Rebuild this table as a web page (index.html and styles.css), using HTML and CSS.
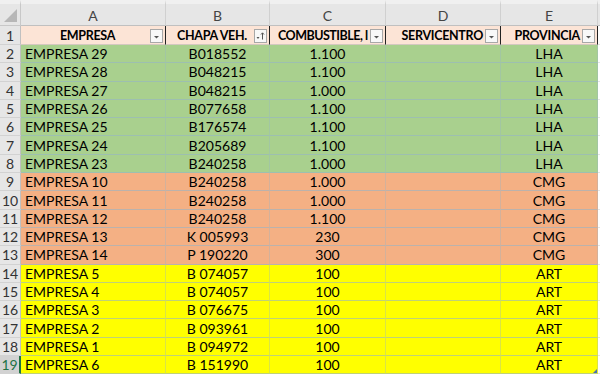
FILE: index.html
```html
<!DOCTYPE html>
<html>
<head>
<meta charset="utf-8">
<link rel="stylesheet" href="styles.css">
</head>
<body>
<div class="sheet">
  <div class="corner"><svg width="21" height="25" viewBox="0 0 21 25"><polygon points="17,9 17,22 4,22" fill="#b7b7b7"/></svg></div>
  <div class="colh">A</div><div class="colh">B</div><div class="colh">C</div><div class="colh">D</div><div class="colh">E</div><div class="colh end"></div>

  <div class="rowh hr">1</div>
  <div class="th"><span class="lbl">EMPRESA</span><span class="dd"><svg width="11" height="12" viewBox="0 0 11 12"><polygon points="3,6 8,6 5.5,8.5" fill="#555"/></svg></span></div>
  <div class="th"><span class="lbl">CHAPA VEH.</span><span class="dd"><svg width="11" height="12" viewBox="0 0 11 12"><polygon points="1.5,7 4.5,7 3,9" fill="#555"/><path d="M7.5 3V9.5M6 4.5L7.5 2.8L9 4.5" stroke="#555" stroke-width="1" fill="none"/></svg></span></div>
  <div class="th"><span class="lbl left">COMBUSTIBLE, l</span><span class="dd"><svg width="11" height="12" viewBox="0 0 11 12"><polygon points="3,6 8,6 5.5,8.5" fill="#555"/></svg></span></div>
  <div class="th right"><span class="lbl">SERVICENTRO</span><span class="dd"><svg width="11" height="12" viewBox="0 0 11 12"><polygon points="3,6 8,6 5.5,8.5" fill="#555"/></svg></span></div>
  <div class="th right"><span class="lbl">PROVINCIA</span><span class="dd"><svg width="11" height="12" viewBox="0 0 11 12"><polygon points="3,6 8,6 5.5,8.5" fill="#555"/></svg></span></div>
  <div class="tail hr"></div>

  <div class="rowh">2</div><div class="c g l">EMPRESA 29</div><div class="c g">B018552</div><div class="c g">1.100</div><div class="c g"></div><div class="c g">LHA</div><div class="tail"></div>
  <div class="rowh">3</div><div class="c g l">EMPRESA 28</div><div class="c g">B048215</div><div class="c g">1.100</div><div class="c g"></div><div class="c g">LHA</div><div class="tail"></div>
  <div class="rowh">4</div><div class="c g l">EMPRESA 27</div><div class="c g">B048215</div><div class="c g">1.000</div><div class="c g"></div><div class="c g">LHA</div><div class="tail"></div>
  <div class="rowh">5</div><div class="c g l">EMPRESA 26</div><div class="c g">B077658</div><div class="c g">1.100</div><div class="c g"></div><div class="c g">LHA</div><div class="tail"></div>
  <div class="rowh">6</div><div class="c g l">EMPRESA 25</div><div class="c g">B176574</div><div class="c g">1.100</div><div class="c g"></div><div class="c g">LHA</div><div class="tail"></div>
  <div class="rowh">7</div><div class="c g l">EMPRESA 24</div><div class="c g">B205689</div><div class="c g">1.100</div><div class="c g"></div><div class="c g">LHA</div><div class="tail"></div>
  <div class="rowh">8</div><div class="c g l">EMPRESA 23</div><div class="c g">B240258</div><div class="c g">1.000</div><div class="c g"></div><div class="c g">LHA</div><div class="tail"></div>

  <div class="rowh">9</div><div class="c o l">EMPRESA 10</div><div class="c o">B240258</div><div class="c o">1.000</div><div class="c o"></div><div class="c o">CMG</div><div class="tail"></div>
  <div class="rowh">10</div><div class="c o l">EMPRESA 11</div><div class="c o">B240258</div><div class="c o">1.000</div><div class="c o"></div><div class="c o">CMG</div><div class="tail"></div>
  <div class="rowh">11</div><div class="c o l">EMPRESA 12</div><div class="c o">B240258</div><div class="c o">1.100</div><div class="c o"></div><div class="c o">CMG</div><div class="tail"></div>
  <div class="rowh">12</div><div class="c o l">EMPRESA 13</div><div class="c o">K 005993</div><div class="c o">230</div><div class="c o"></div><div class="c o">CMG</div><div class="tail"></div>
  <div class="rowh">13</div><div class="c o l">EMPRESA 14</div><div class="c o">P 190220</div><div class="c o">300</div><div class="c o"></div><div class="c o">CMG</div><div class="tail"></div>

  <div class="rowh">14</div><div class="c y l">EMPRESA 5</div><div class="c y">B 074057</div><div class="c y">100</div><div class="c y"></div><div class="c y">ART</div><div class="tail"></div>
  <div class="rowh">15</div><div class="c y l">EMPRESA 4</div><div class="c y">B 074057</div><div class="c y">100</div><div class="c y"></div><div class="c y">ART</div><div class="tail"></div>
  <div class="rowh">16</div><div class="c y l">EMPRESA 3</div><div class="c y">B 076675</div><div class="c y">100</div><div class="c y"></div><div class="c y">ART</div><div class="tail"></div>
  <div class="rowh">17</div><div class="c y l">EMPRESA 2</div><div class="c y">B 093961</div><div class="c y">100</div><div class="c y"></div><div class="c y">ART</div><div class="tail"></div>
  <div class="rowh">18</div><div class="c y l">EMPRESA 1</div><div class="c y">B 094972</div><div class="c y">100</div><div class="c y"></div><div class="c y">ART</div><div class="tail"></div>
  <div class="rowh sel">19</div><div class="c y l">EMPRESA 6</div><div class="c y">B 151990</div><div class="c y">100</div><div class="c y"></div><div class="c y last">ART</div><div class="tail"></div>
</div>
</body>
</html>
```

FILE: styles.css
```css
* { box-sizing: border-box; }
html, body { margin: 0; padding: 0; background: #fff; overflow: hidden; }
body { width: 600px; height: 376px; }

.sheet {
  display: grid;
  grid-template-columns: 21px 145px 104px 116px 115px 97px 2px;
  grid-template-rows: 26px 19px repeat(18, 18.3px);
  font-family: Lato, "Open Sans", sans-serif;
  font-size: 14px;
  color: #000;
}

.corner {
  background: #e6e6e6;
  border-top: 4px solid #f0f0f0;
  border-right: 1px solid #c8c8c8;
  border-bottom: 1px solid #c8c8c8;
}
.corner svg { display: block; margin-top: -4px; }

.colh {
  background: #e6e6e6;
  border-top: 4px solid #f0f0f0;
  border-right: 1px solid #d0d0d0;
  border-bottom: 1px solid #c0c0c0;
  color: #444;
  font-size: 14px;
  display: flex;
  align-items: center;
  justify-content: center;
  padding-top: 2px;
}
.colh.end { border-right: none; }

.rowh {
  background: #e6e6e6;
  border-right: 1px solid #c0c0c0;
  border-bottom: 1px solid #d2d2d2;
  color: #333;
  font-size: 14px;
  display: flex;
  align-items: center;
  justify-content: center;
}
.rowh.sel {
  color: #217346;
  background: #d2d2d2;
  border-right: 2px solid #217346;
}

.th {
  background: #fce4d6;
  border-right: 1px solid #222;
  border-bottom: 1px solid #d4c8c0;
  font-weight: bold;
  font-size: 12.5px;
  letter-spacing: -0.3px;
  display: flex;
  align-items: center;
  padding: 0 2px 0 4px;
  overflow: hidden;
}
.th .lbl {
  flex: 1;
  min-width: 0;
  text-align: center;
  white-space: nowrap;
  overflow: hidden;
  text-overflow: clip;
}
.th .lbl.left { text-align: left; padding-left: 4px; letter-spacing: -0.5px; }
.th.right .lbl { text-align: right; padding-right: 2px; }
.dd {
  flex: none;
  width: 13px;
  height: 14px;
  background: #f8f8f8;
  border: 1px solid #a8a8a8;
  display: flex;
  align-items: center;
  justify-content: center;
  margin-top: 2px;
}
.dd svg { display: block; }

.c {
  display: flex;
  align-items: center;
  justify-content: center;
  border-right: 1px solid rgba(150, 180, 200, 0.35);
  border-bottom: 1px solid rgba(150, 180, 200, 0.6);
  white-space: nowrap;
  overflow: hidden;
}
.c.l { justify-content: flex-start; padding-left: 4px; }
.g { background: #a9d08e; }
.o { background: #f4b084; }
.y { background: #ffff00; }
.last { position: relative; }
.last::after {
  content: "";
  position: absolute;
  right: 0;
  bottom: 0;
  width: 0;
  height: 0;
  border-left: 4px solid transparent;
  border-bottom: 4px solid #4a6fb0;
}

.tail { background: #fff; border-bottom: 1px solid #e4e4e4; }
.tail.hr { background: #fff; }
```
